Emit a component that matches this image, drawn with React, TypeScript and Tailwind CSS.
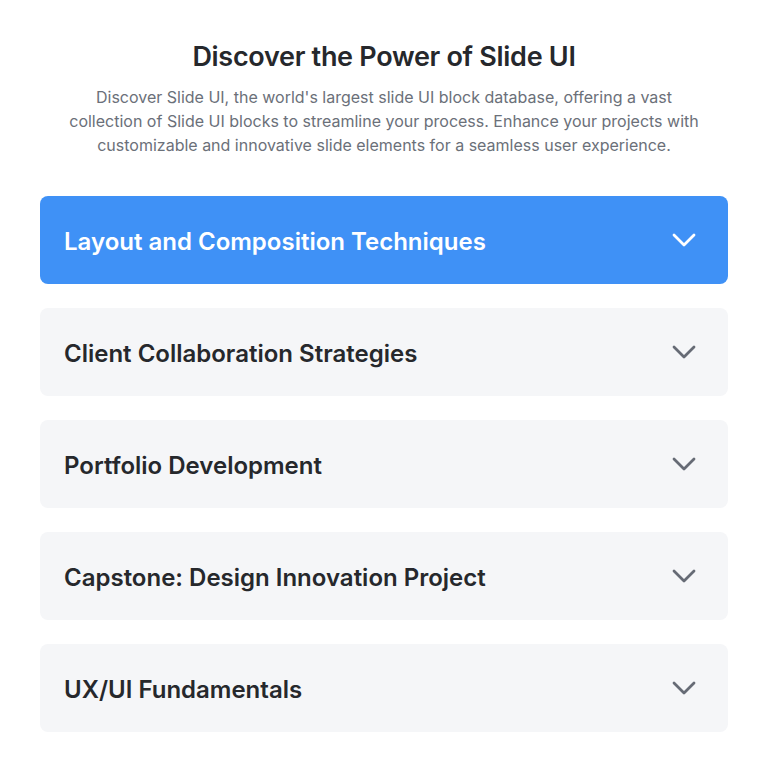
import React from "react";

const items = [
  "Layout and Composition Techniques",
  "Client Collaboration Strategies",
  "Portfolio Development",
  "Capstone: Design Innovation Project",
  "UX/UI Fundamentals",
];

function Chevron({ className }: { className: string }) {
  return (
    <svg width="24" height="24" viewBox="0 0 24 24" fill="none" className={className}>
      <polyline
        points="2,7 12,17 22,7"
        stroke="currentColor"
        strokeWidth="2.8"
        strokeLinecap="round"
        strokeLinejoin="round"
      />
    </svg>
  );
}

export default function App() {
  return (
    <div
      className="w-[768px] min-h-[772px] bg-white px-10 pt-[41px]"
      style={{ fontFamily: "Inter, 'Noto Sans', sans-serif" }}
    >
      <h1 className="text-center text-[27px] leading-[32px] font-semibold text-[#26282c] tracking-[-0.3px]">
        Discover the Power of Slide UI
      </h1>
      <p className="mx-auto mt-3 max-w-[640px] text-center text-[16px] leading-[24px] text-[#6b7079]">
        Discover Slide UI, the world's largest slide UI block database, offering a vast collection of Slide UI blocks to streamline your process. Enhance your projects with customizable and innovative slide elements for a seamless user experience.
      </p>
      <div className="mt-[39px] flex flex-col gap-6">
        {items.map((t, i) => {
          const active = i === 0;
          return (
            <div
              key={t}
              className={
                active
                  ? "flex h-[88px] items-center justify-between rounded-lg bg-[#3f91f6] pl-6 pr-8"
                  : "flex h-[88px] items-center justify-between rounded-lg bg-[#f5f6f8] pl-6 pr-8"
              }
            >
              <span
                className={
                  active
                    ? "pt-[3px] text-[24px] leading-[32px] font-semibold text-white"
                    : "pt-[3px] text-[24px] leading-[32px] font-semibold text-[#26282c]"
                }
              >
                {t}
              </span>
              <Chevron className={active ? "text-white" : "text-[#666b75]"} />
            </div>
          );
        })}
      </div>
    </div>
  );
}
